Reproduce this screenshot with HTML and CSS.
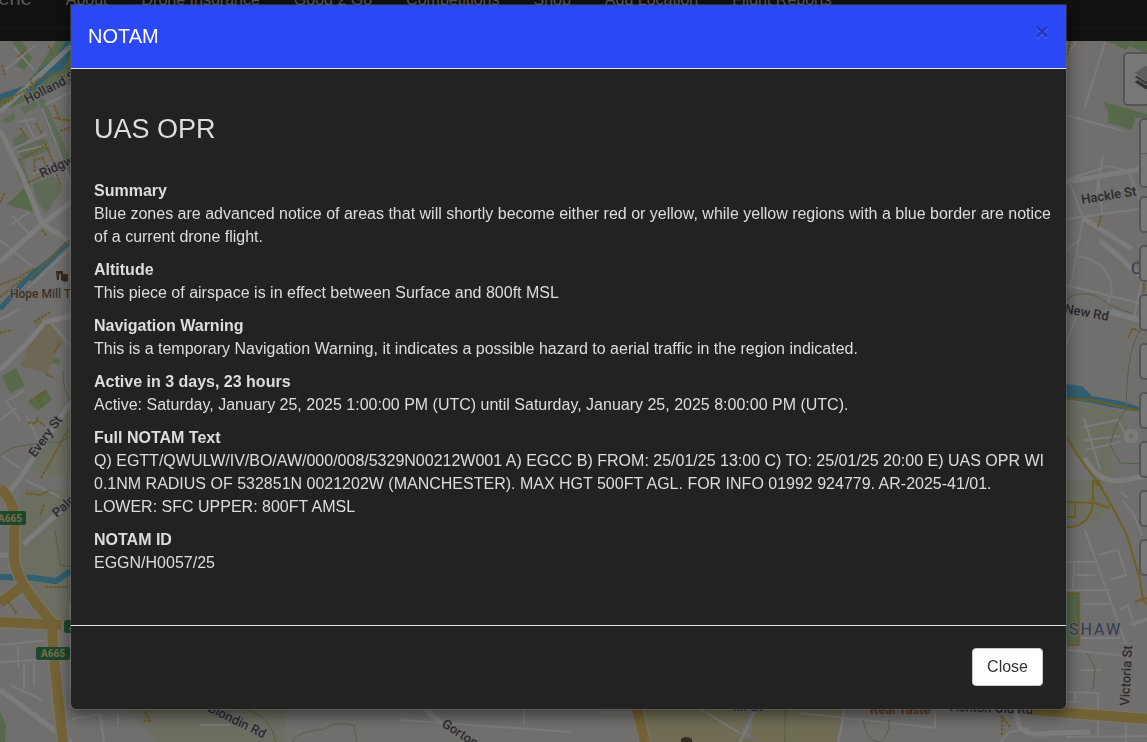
FILE: index.html
```html
<!DOCTYPE html>
<html lang="en">
<head>
    <meta charset="UTF-8">
    <meta name="viewport" content="width=device-width, initial-scale=1.0">
    <title>NOTAM</title>
    <link rel="stylesheet" href="styles.css">
</head>
<body>
    <header class="topbar">
        <nav class="topnav">
            <a class="brand" href="#">Scene</a>
            <a href="#">About</a>
            <a href="#">Drone Insurance</a>
            <a href="#">Good 2 Go</a>
            <a href="#">Competitions</a>
            <a href="#">Shop</a>
            <a href="#">Add Location</a>
            <a href="#">Flight Reports</a>
        </nav>
    </header>

    <main class="map">
        <svg class="map-tiles" viewBox="0 41 1147 701" preserveAspectRatio="xMidYMin slice" aria-hidden="true">
            <!-- Parks and open ground -->
            <g class="park">
                <path d="M0 99L26 85L40 66L56 41H71V84L42 94L0 112Z"/>
                <path d="M22 41L32 58L24 70L16 66L23 57L12 41Z"/>
                <path d="M12 200L25 187L33 212L6 204Z"/>
                <path d="M2 376L16 368L25 386L10 393Z"/>
                <path d="M28 402L46 389L52 400L38 411Z"/>
                <path d="M42 354L49 352L53 359L60 358L59 364L51 363Z"/>
                <path d="M0 712L6 724L5 742H0Z"/>
                <path d="M1108 41H1147V54L1130 46L1126 50Z"/>
                <path d="M1103 102L1147 114V118L1135 118L1132 130L1108 123L1108 111Z"/>
                <path d="M1066 592H1080V646H1066Z"/>
            </g>
            <path class="verge" d="M2 120L14 112L16 118L6 124ZM20 108L36 100L38 106L24 114ZM38 100L44 98L71 160V180L62 160L52 140ZM12 140L24 132L28 144L46 138L50 150L40 154L22 160ZM32 184L54 176L62 190L46 214L38 202ZM12 158H22L30 182H20Z"/>
            <g class="field">
                <path d="M71 395L71 480L30 470L42 440Z"/>
                <path d="M22 490H71V625L50 616L20 565L14 535Z"/>
                <path d="M1066 400L1125 412L1128 430L1110 445L1114 475L1100 486L1066 436Z"/>
                <path d="M1066 480H1100L1113 505L1098 520L1066 526Z"/>
                <path d="M130 709H285V742H155Z"/>
            </g>
            <path class="sand" d="M38 318L53 326L62 340L55 356L47 373L20 366L30 342Z"/>
            <path class="yard" d="M640 709H750L740 735L763 742H648ZM755 709H842L838 742H763L750 735Z"/>

            <!-- Water -->
            <path class="water" d="M0 94L32 83Q38 66 54 60L66 41H71V54L62 70Q48 76 34 90L0 100Z"/>
            <path class="canal" d="M0 309L22 284L32 274L53 258M30 280L71 240"/>
            <path class="stream" d="M0 577L34 578L56 581L71 571"/>
            <path class="water" d="M1066 384L1082 386L1092 396L1120 401L1140 407V412L1110 407L1092 403L1066 399Z"/>

            <!-- Minor streets -->
            <g class="lane">
                <path d="M5 70L36 45M14 47L34 70M0 240L34 268M28 288L71 248M25 188L34 205M42 108L71 182M11 150L46 134M17 122L35 119M24 118L36 140M45 105L71 92"/>
                <path d="M17 152L48 145M32 174L55 166M10 225L30 212M12 215L30 235M0 320L20 309M52 324L71 346M8 400L24 391M0 420L16 408M6 401L20 420M26 415L38 440M0 455L20 468M25 480L60 497"/>
                <path d="M0 645L50 640M0 662L70 658M18 646V668M24 663V689M34 661V685M10 685L42 700M70 602V690M72 719L100 714M100 714L104 742M118 714V724M200 725H230M400 720L572 732M524 709V724"/>
                <path d="M1066 60L1076 41M1085 107L1105 42M1066 115L1123 131M1066 180L1108 166L1129 171L1139 199M1117 192L1134 186M1096 195L1103 156M1066 219L1147 208M1069 180L1083 218L1078 245M1098 175L1102 213"/>
                <path d="M1066 250L1079 240L1070 290M1066 285L1147 305M1078 256Q1110 262 1112 290L1107 304M1142 280L1134 318M1112 310L1142 319M1066 345L1076 316M1083 427L1118 420L1129 441M1084 440L1120 436M1086 450L1120 442M1084 418L1100 470"/>
                <path d="M1085 530L1128 650M1066 562L1095 562M1074 564L1073 588M1076 575H1095M1067 590H1110M1083 604H1110M1081 638H1120M1068 650L1127 656M1080 670H1102M1098 555L1118 550L1126 575L1110 580M1122 500L1134 515L1142 535M1121 492L1128 498M1120 610L1128 605L1134 625L1147 620M1130 625L1147 618"/>
                <path d="M1066 692L1098 693Q1098 709 1098 735M1066 702H1075V692M1066 737L1147 736M1126 725V742M1128 650L1128 662M600 712H640M700 709L740 733M756 709L740 742M800 713L935 728V709M1000 742L1010 732L1030 728M845 709L838 742"/>
            </g>

            <!-- Wider streets -->
            <g class="street">
                <path d="M0 130L22 175L42 224L71 242M0 262L42 224L71 202M71 46L0 112M0 370L30 340L45 322L71 316M6 496L20 478L71 402M24 544L71 501M0 555L12 556M0 690L71 742M1066 182L1147 168M1083 218L1132 249M1100 241L1122 259Q1136 275 1147 278M1105 311L1147 322M1085 458Q1098 485 1125 480L1147 476M425 709L450 730M1014 709L1020 728Q1030 737 1050 733L1090 732"/>
                <circle cx="1131" cy="436" r="5"/>
            </g>

            <!-- Footpaths -->
            <path class="path" d="M0 456Q10 446 28 445L50 442Q62 444 68 437M71 400Q62 390 63 370M55 530L60 565L71 567M1066 300Q1080 288 1100 298L1110 305L1133 314M1141 330Q1127 345 1126 409Q1115 425 1110 445L1120 463L1147 464M1087 653L1095 668L1093 690M293 742Q294 732 325 729Q335 721 354 725L357 742M245 709Q270 715 276 742M863 720Q866 742 880 742Q890 735 889 720M785 709V742"/>

            <!-- Main roads -->
            <g class="road-edge">
                <path d="M0 488Q18 505 14 530L14 560Q18 585 52 622L53 650L63 742M0 603L20 588M0 622L61 625"/>
                <path d="M637 709L645 742"/>
                <path d="M1020 709L1147 719"/>
            </g>
            <g class="road">
                <path d="M0 488Q18 505 14 530L14 560Q18 585 52 622L53 650L63 742M0 603L20 588M0 622L61 625"/>
                <path d="M637 709L645 742"/>
                <path d="M1020 709L1147 719"/>
            </g>
            <path class="track" d="M1066 399L1092 400L1140 411M1066 436Q1078 458 1095 478L1100 486L1113 508L1127 535L1140 580L1143 600L1147 605M1066 502L1094 503L1110 508M1093 480V505Q1088 528 1066 527M1075 505V517H1066M1092 480L1102 488M1135 602L1147 598"/>

            <!-- Mapped buildings -->
            <g class="building">
                <path d="M0 102Q24 93 33 84Q42 74 64 73M30 78L35 93M4 104L14 98M18 57L25 50M2 65L5 75M48 45L53 55"/>
                <path d="M24 158L46 145L53 162M35 172L34 160L43 158L46 166M28 183L42 176M20 128L28 139M36 123L42 134M54 105L60 120M54 118L71 121M60 131L71 127M55 170L61 186"/>
                <path d="M0 203L5 192M42 230L47 236M0 285L20 277L34 268M0 297L24 278M30 278L71 239M34 322L50 312M0 333L11 330M54 352L62 342M46 374L54 378"/>
                <path d="M30 401L45 391L38 402L43 406M28 422L35 424L38 416M37 420L45 426M68 430L41 478M26 493L40 495L50 490M40 515L44 505M8 601L17 614M45 587H68M145 712L151 722L143 720"/>
                <path d="M1070 41L1066 60M1101 216L1098 227M1128 338L1133 328L1140 332M1136 262L1147 256M1144 279V292M1068 594H1078V645H1068M1002 735V717L1010 727M1093 480V487M1102 490L1098 480"/>
            </g>

            <!-- Road shields -->
            <g class="shield">
                <rect x="-6" y="511" width="32" height="14" rx="2"/>
                <rect x="36" y="647" width="34" height="13" rx="2"/>
                <rect x="64" y="620" width="34" height="13" rx="2"/>
                <text x="-2" y="522">A665</text>
                <text x="41" y="657">A665</text>
                <text x="69" y="630">A665</text>
            </g>

            <!-- Points of interest -->
            <g class="poi">
                <path d="M56 271H63V274H59V280H57Z"/>
                <path d="M61 274H68V281Q64 283 61 280Z"/>
                <path d="M681 739Q686 735 692 739V742H681Z"/>
            </g>

            <g class="label">
                <text transform="translate(27 104) rotate(-27)">Holland St</text>
                <text transform="translate(42 178) rotate(-25)">Ridgway St</text>
                <text transform="translate(35 458) rotate(-54)">Every St</text>
                <text transform="translate(57 518) rotate(-42)">Palmerston St</text>
                <text class="label-brown" x="10" y="298">Hope Mill Theatre</text>
                <text transform="translate(1082 204) rotate(-9)">Hackle St</text>
                <text transform="translate(1064 313) rotate(10)">New Rd</text>
                <text class="label-area" x="1131" y="274">C</text>
                <text class="label-area" x="1069" y="635">SHAW</text>
                <text transform="translate(1129 706) rotate(-87)">Victoria St</text>
                <text transform="translate(207 711) rotate(26)">Blondin Rd</text>
                <text transform="translate(441 726) rotate(33)">Gorton Rd</text>
                <text x="733" y="711">Ilk St</text>
                <text class="label-food" x="870" y="714">Real Taste</text>
                <text transform="translate(950 711) rotate(2)">Ashton Old Rd</text>
            </g>
        </svg>

        <div class="map-controls">
            <button class="control control-layers" aria-label="Layers">
                <svg width="26" height="26" viewBox="0 0 26 26" aria-hidden="true">
                    <path d="M1 17L13 25L25 17L13 9Z" fill="#666" stroke="#eee"/>
                    <path d="M1 12L13 20L25 12L13 4Z" fill="#777" stroke="#eee"/>
                    <path d="M1 8L13 16L25 8L13 0Z" fill="#bbb" stroke="#eee"/>
                </svg>
            </button>
            <div class="control-zoom">
                <button aria-label="Zoom in"></button>
                <button aria-label="Zoom out"></button>
            </div>
            <button class="control" aria-label="Locate"></button>
            <button class="control" aria-label="Search"></button>
            <button class="control" aria-label="Measure"></button>
            <button class="control" aria-label="Filter"></button>
            <button class="control" aria-label="Weather"></button>
            <button class="control" aria-label="Airspace"></button>
            <button class="control" aria-label="Share"></button>
            <button class="control" aria-label="Help"></button>
        </div>
    </main>

    <div class="backdrop"></div>

    <div class="modal" role="dialog" aria-labelledby="modal-title">
        <div class="modal-content">
            <div class="modal-header">
                <h4 class="modal-title" id="modal-title">NOTAM</h4>
                <button class="modal-close" aria-label="Dismiss">×</button>
            </div>
            <div class="modal-body">
                <h3>UAS OPR</h3>
                <p><strong>Summary</strong><br>Blue zones are advanced notice of areas that will shortly become either red or yellow, while yellow regions with a blue border are notice of a current drone flight.</p>
                <p><strong>Altitude</strong><br>This piece of airspace is in effect between Surface and 800ft MSL</p>
                <p><strong>Navigation Warning</strong><br>This is a temporary Navigation Warning, it indicates a possible hazard to aerial traffic in the region indicated.</p>
                <p><strong>Active in 3 days, 23 hours</strong><br>Active: Saturday, January 25, 2025 1:00:00 PM (UTC) until Saturday, January 25, 2025 8:00:00 PM (UTC).</p>
                <p><strong>Full NOTAM Text</strong><br>Q) EGTT/QWULW/IV/BO/AW/000/008/5329N00212W001 A) EGCC B) FROM: 25/01/25 13:00 C) TO: 25/01/25 20:00 E) UAS OPR WI 0.1NM RADIUS OF 532851N 0021202W (MANCHESTER). MAX HGT 500FT AGL. FOR INFO 01992 924779. AR-2025-41/01.<br>LOWER: SFC UPPER: 800FT AMSL</p>
                <p><strong>NOTAM ID</strong><br>EGGN/H0057/25</p>
            </div>
            <div class="modal-footer">
                <button class="btn">Close</button>
            </div>
        </div>
    </div>
</body>
</html>
```

FILE: styles.css
```css
* {
    box-sizing: border-box;
}

body {
    margin: 0;
    height: 100vh;
    overflow: hidden;
    display: flex;
    flex-direction: column;
    background-color: #222;
    color: #ddd;
    font-family: "Liberation Sans", Arial, sans-serif;
    font-size: 16px;
    line-height: 23px;
}

/* Top navigation */
.topbar {
    padding-bottom: 13px;
    background-color: #222;
}

.topnav {
    display: flex;
    align-items: baseline;
    gap: 34px;
    height: 41px;
    margin-top: -13px;
    margin-left: -25px;
    border-bottom: 1px solid #303030;
    white-space: nowrap;
}

.topnav a {
    color: #b0b0b0;
    text-decoration: none;
}

.topnav .brand {
    font-size: 20px;
}

/* Map */
.map {
    position: relative;
    flex: 1;
    min-height: 0;
    overflow: hidden;
    background-color: #e2dfda;
}

.map-tiles {
    display: block;
    width: 100%;
    height: 100%;
}

.map-tiles path,
.map-tiles circle {
    fill: none;
}

.map-tiles .park path { fill: #acd296; }
.map-tiles .verge { fill: #bcd4ac; }
.map-tiles .field path { fill: #d8dcc4; }
.map-tiles .sand { fill: #dccfac; }
.map-tiles .yard { fill: #e0d9a8; }
.map-tiles .water { fill: #62bfe0; }
.canal { stroke: #62bfe0; stroke-width: 5; }
.stream { stroke: #62bfe0; stroke-width: 6; }
.lane { stroke: #f6f6fa; stroke-width: 2; }
.street { stroke: #f8f8fa; stroke-width: 5; }
.path { stroke: #a3bf91; stroke-width: 1; }
.road-edge { stroke: #eee8d0; stroke-width: 13; }
.road { stroke: #e4c46a; stroke-width: 10; }
.track { stroke: #dcbc48; stroke-width: 2; }
.building { stroke: #d4b450; stroke-width: 2; stroke-dasharray: 3 1; }
.shield rect { fill: #3c9058; }
.map-tiles .poi path { fill: #6b5444; }

.shield text {
    fill: #e6dc9c;
    font-family: Roboto, sans-serif;
    font-size: 10px;
    font-weight: 700;
}

.label text {
    fill: #55555a;
    stroke: #e2dfda;
    stroke-width: 2;
    paint-order: stroke;
    font-family: Roboto, sans-serif;
    font-size: 13px;
    font-weight: 500;
}

.label .label-brown {
    fill: #79624f;
    font-size: 12px;
}

.label .label-food {
    fill: #c06a40;
}

.label .label-area {
    fill: #6674a8;
    font-size: 16px;
    font-weight: 400;
    letter-spacing: 2px;
}

/* Map buttons, running off the right edge */
.map-controls {
    position: absolute;
    top: 11px;
    right: -30px;
    display: flex;
    flex-direction: column;
    align-items: flex-end;
    gap: 12px;
}

.control,
.control-zoom {
    width: 38px;
    height: 37px;
    padding: 0;
    border: 2px solid #aaa;
    border-radius: 5px;
    background-color: #efefef;
}

.control-layers {
    width: 54px;
    height: 54px;
    padding-left: 8px;
    text-align: left;
}

.control-zoom {
    display: flex;
    flex-direction: column;
    height: 70px;
    margin-bottom: -4px;
}

.control-zoom button {
    flex: 1;
    border: 0;
    background: none;
}

.control-zoom button:first-child {
    border-bottom: 1px solid #bbb;
}

/* Modal */
.backdrop {
    position: fixed;
    inset: 0;
    background-color: #000;
    opacity: 0.5;
}

.modal {
    position: fixed;
    inset: 0;
    padding: 4px 80px 0 70px;
}

.modal-content {
    overflow: hidden;
    border: 1px solid rgba(136, 136, 136, 0.3);
    border-radius: 0 0 6px 6px;
    background-color: #222;
    background-clip: padding-box;
    box-shadow: 0 5px 15px rgba(0, 0, 0, 0.5);
}

.modal-header {
    display: flex;
    justify-content: space-between;
    align-items: flex-start;
    padding: 17px;
    border-bottom: 1px solid #e5e5e5;
    background-color: #2a48f3;
}

.modal-title {
    margin: 0;
    color: #fff;
    font-size: 20px;
    font-weight: 400;
    line-height: 29px;
}

.modal-close {
    padding: 0;
    border: 0;
    background: none;
    color: #000;
    font-family: inherit;
    font-size: 24px;
    font-weight: 700;
    line-height: 20px;
    text-shadow: 0 1px 0 #fff;
    opacity: 0.2;
    cursor: pointer;
}

.modal-body {
    padding: 22px 10px 41px 23px;
}

.modal-body h3 {
    margin: 23px 0 35px;
    font-size: 27px;
    font-weight: 400;
    line-height: 30px;
}

.modal-body p {
    margin: 0 0 10px;
}

.modal-footer {
    padding: 22px 23px 23px;
    border-top: 1px solid #e5e5e5;
    text-align: right;
}

.btn {
    padding: 8px 14px;
    border: 1px solid #ccc;
    border-radius: 4px;
    background-color: #fff;
    color: #333;
    font-family: inherit;
    font-size: 16px;
    line-height: 20px;
    cursor: pointer;
}
```
